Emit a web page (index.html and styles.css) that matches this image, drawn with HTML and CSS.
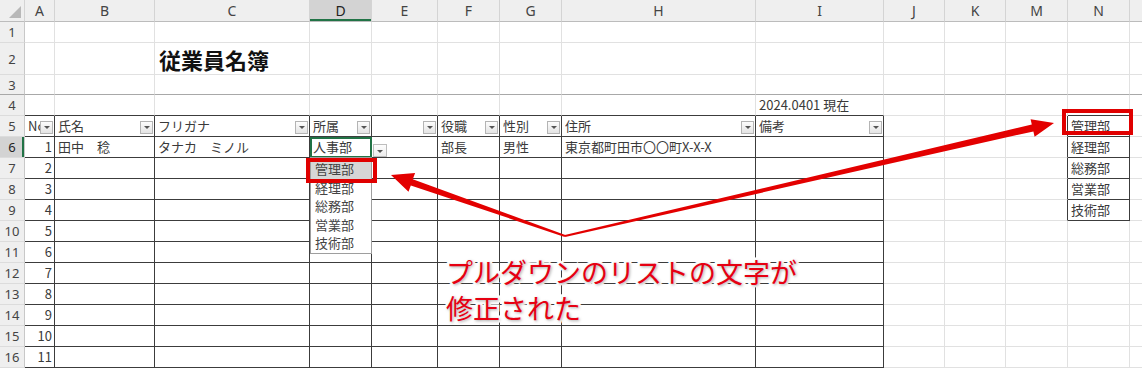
FILE: index.html
```html
<!DOCTYPE html>
<html lang="ja">
  <head>
    <meta charset="UTF-8" />
    <meta name="viewport" content="width=device-width, initial-scale=1.0" />
    <title>従業員名簿</title>
    <link rel="stylesheet" href="styles.css">
  </head>
  <body>
    <div class="sheet">
      <table class="grid">
        <colgroup>
          <col class="c-rh"><col class="c-a"><col class="c-b"><col class="c-c"><col class="c-d">
          <col class="c-e"><col class="c-f"><col class="c-g"><col class="c-h"><col class="c-i">
          <col class="c-j"><col class="c-k"><col class="c-m"><col class="c-n"><col class="c-o">
        </colgroup>
        <thead>
          <tr class="colhdr">
            <th class="corner"></th>
            <th>A</th><th>B</th><th>C</th><th class="cur">D</th><th>E</th><th>F</th><th>G</th>
            <th>H</th><th>I</th><th>J</th><th>K</th><th>M</th><th>N</th><th></th>
          </tr>
        </thead>
        <tbody>
          <tr class="r1">
            <th class="rh">1</th>
            <td></td><td></td><td></td><td></td><td></td><td></td><td></td><td></td><td></td><td></td><td></td><td></td><td></td><td></td>
          </tr>
          <tr class="r2">
            <th class="rh">2</th>
            <td></td><td></td><td class="title">従業員名簿</td><td></td><td></td><td></td><td></td><td></td><td></td><td></td><td></td><td></td><td></td><td></td>
          </tr>
          <tr class="r3">
            <th class="rh">3</th>
            <td></td><td></td><td></td><td></td><td></td><td></td><td></td><td></td><td></td><td></td><td></td><td></td><td></td><td></td>
          </tr>
          <tr>
            <th class="rh">4</th>
            <td class="top"></td><td class="top"></td><td class="top"></td><td class="top"></td><td class="top"></td>
            <td class="top"></td><td class="top"></td><td class="top"></td><td class="top">2024.0401 現在</td>
            <td></td><td></td><td></td><td class="top"></td><td></td>
          </tr>
          <tr class="head">
            <th class="rh">5</th>
            <td class="t"><div class="hd"><span class="lbl">No</span><span class="fb"></span></div></td>
            <td class="t"><div class="hd"><span class="lbl">氏名</span><span class="fb"></span></div></td>
            <td class="t"><div class="hd"><span class="lbl">フリガナ</span><span class="fb"></span></div></td>
            <td class="t"><div class="hd"><span class="lbl">所属</span><span class="fb"></span></div></td>
            <td class="t"><div class="hd"><span class="lbl"></span><span class="fb"></span></div></td>
            <td class="t"><div class="hd"><span class="lbl">役職</span><span class="fb"></span></div></td>
            <td class="t"><div class="hd"><span class="lbl">性別</span><span class="fb"></span></div></td>
            <td class="t"><div class="hd"><span class="lbl">住所</span><span class="fb"></span></div></td>
            <td class="t"><div class="hd"><span class="lbl">備考</span><span class="fb"></span></div></td>
            <td></td><td></td><td class="ml"></td><td class="t">管理部</td><td></td>
          </tr>
          <tr>
            <th class="rh cur">6</th>
            <td class="t num">1</td><td class="t">田中　稔</td><td class="t">タナカ　ミノル</td>
            <td class="t sel">人事部</td><td class="t"></td><td class="t">部長</td><td class="t">男性</td>
            <td class="t">東京都町田市〇〇町X-X-X</td><td class="t"></td>
            <td></td><td></td><td class="ml"></td><td class="t">経理部</td><td></td>
          </tr>
        </tbody>
      </table>

      <!-- プルダウン -->
      <span class="dd-btn"></span>
      <ul class="dd-list">
        <li class="on">管理部</li>
        <li>経理部</li>
        <li>総務部</li>
        <li>営業部</li>
        <li>技術部</li>
      </ul>

      <div class="mark mark-dd"></div>
      <div class="mark mark-n"></div>

      <svg class="arrows" width="1142" height="378" viewBox="0 0 1142 378">
        <polygon points="565.3,235.1 412.8,179.2 415.1,172.9 391,175 408.5,191.7 410.8,185.4 564.7,236.9" />
        <polygon points="564.8,235 1031.8,124.6 1030.6,119.2 1054,123 1034.6,136.7 1033.4,131.4 565.2,237" />
      </svg>

      <p class="note">プルダウンのリストの文字が<br>修正された</p>
    </div>

    <script>
      // 7行目以降は空の行
      const nList = { 7: "総務部", 8: "営業部", 9: "技術部" };
      const tbody = document.querySelector(".grid tbody");

      for (let r = 7; r <= 16; r++) {
        const tr = document.createElement("tr");
        let html = `<th class="rh">${r}</th><td class="t num">${r - 5}</td>`;
        for (let i = 0; i < 8; i++) {
          html += '<td class="t"></td>';
        }
        html += "<td></td><td></td>";
        if (nList[r]) {
          html += `<td class="ml"></td><td class="t">${nList[r]}</td>`;
        } else {
          html += "<td></td><td></td>";
        }
        html += "<td></td>";
        tr.innerHTML = html;
        tbody.appendChild(tr);
      }
    </script>
  </body>
</html>
```

FILE: styles.css
```css
body {
  margin: 0;
  background-color: #fff;
  overflow: hidden;
  font-family: "Noto Sans CJK JP", "Noto Sans", sans-serif;
  color: #3a3a3a;
}
.sheet {
  position: relative;
  width: 1142px;
  height: 378px;
}
.grid {
  table-layout: fixed;
  border-collapse: separate;
  border-spacing: 0;
  width: 1190px;
  font-size: 13px;
}
.c-rh { width: 25px; }
.c-a { width: 30px; }
.c-b { width: 100px; }
.c-c { width: 155px; }
.c-d { width: 62px; }
.c-e { width: 66px; }
.c-f { width: 62px; }
.c-g { width: 62px; }
.c-h { width: 194px; }
.c-i { width: 128px; }
.c-j { width: 61px; }
.c-k { width: 61px; }
.c-m { width: 62px; }
.c-n { width: 62px; }
.c-o { width: 60px; }

.grid td {
  box-sizing: border-box;
  height: 21px;
  padding: 0 3px;
  line-height: 18px;
  white-space: nowrap;
  overflow: hidden;
  border-right: 1px solid #e1e1e1;
  border-bottom: 1px solid #e1e1e1;
  vertical-align: middle;
}
.r1 td { height: 21px; }
.r2 td { height: 32px; }
.r3 td {
  height: 20px;
  border-bottom-color: #a8a8a8;
}
.r3 th.rh { border-bottom-color: #a8a8a8; }

.colhdr th {
  box-sizing: border-box;
  height: 22px;
  padding: 0;
  background-color: #efefef;
  border-right: 1px solid #d4d4d4;
  border-bottom: 1px solid #bcbcbc;
  font-family: "Noto Sans", sans-serif;
  font-weight: normal;
  font-size: 14px;
  color: #444;
}
.colhdr th.cur {
  background-color: #d3d3d3;
  color: #222;
  box-shadow: inset 0 -2px #217346;
}
.corner {
  position: relative;
}
.corner::after {
  content: "";
  position: absolute;
  right: 3px;
  bottom: 3px;
  border-left: 12px solid transparent;
  border-bottom: 12px solid #b8b8b8;
}
th.rh {
  box-sizing: border-box;
  padding: 0;
  background-color: #efefef;
  border-right: 1px solid #c8c8c8;
  border-bottom: 1px solid #dcdcdc;
  font-family: "Noto Sans", sans-serif;
  font-weight: normal;
  font-size: 13px;
  color: #444;
  text-align: center;
}
th.rh.cur {
  background-color: #d3d3d3;
  color: #222;
  box-shadow: inset -2px 0 #217346;
}

.grid td.t {
  border-right-color: #3c3c3c;
  border-bottom-color: #3c3c3c;
}
.grid td.top {
  border-bottom-color: #3c3c3c;
}
.grid td.ml {
  border-right-color: #3c3c3c;
}
.grid td.num {
  text-align: right;
  padding-right: 2px;
}
.grid td.sel {
  outline: 2px solid #217346;
  outline-offset: -2px;
}
.grid td.title {
  vertical-align: bottom;
  padding-left: 4px;
  padding-bottom: 2px;
  font-size: 22px;
  font-weight: bold;
  line-height: 26px;
  color: #111;
  overflow: visible;
}

.head td {
  padding: 0 1px 0 3px;
}
.hd {
  display: flex;
  align-items: center;
  justify-content: space-between;
}
.lbl {
  overflow: hidden;
  flex: 1;
  min-width: 0;
}
.fb {
  position: relative;
  flex: none;
  box-sizing: border-box;
  width: 13px;
  height: 13px;
  margin-top: 2px;
  border: 1px solid #b4b4b4;
  background: linear-gradient(#fdfdfd, #e4e4e4);
}
.fb::after,
.dd-btn::after {
  content: "";
  position: absolute;
  left: 50%;
  top: 50%;
  margin: -1px 0 0 -3px;
  border-left: 3px solid transparent;
  border-right: 3px solid transparent;
  border-top: 3px solid #555;
}

.dd-btn {
  position: absolute;
  left: 373px;
  top: 144px;
  box-sizing: border-box;
  width: 14px;
  height: 13px;
  border: 1px solid #bdbdbd;
  background: linear-gradient(#fdfdfd, #ececec);
}
.dd-list {
  position: absolute;
  left: 310px;
  top: 157px;
  box-sizing: border-box;
  width: 62px;
  height: 97px;
  margin: 0;
  padding: 2px 0 0;
  list-style: none;
  background-color: #fff;
  border: 1px solid #9e9e9e;
  font-size: 13px;
  color: #444;
  overflow: hidden;
}
.dd-list li {
  height: 18.5px;
  line-height: 18.5px;
  padding-left: 4px;
}
.dd-list li.on {
  background-color: #d6d6d6;
}

.mark {
  position: absolute;
  box-sizing: border-box;
  border: 4px solid #e00000;
}
.mark-dd {
  left: 306px;
  top: 158px;
  width: 71px;
  height: 25px;
}
.mark-n {
  left: 1062px;
  top: 109px;
  width: 71px;
  height: 26px;
}

.arrows {
  position: absolute;
  left: 0;
  top: 0;
  pointer-events: none;
}
.arrows polygon {
  fill: #e30000;
}

.note {
  position: absolute;
  left: 446px;
  top: 254px;
  margin: 0;
  font-size: 27px;
  line-height: 36px;
  font-weight: 400;
  color: #e60012;
  -webkit-text-stroke: 5px #fff;
  paint-order: stroke fill;
  text-shadow: 1px 1px 3px rgba(0, 0, 0, 0.35);
  white-space: nowrap;
}
```
